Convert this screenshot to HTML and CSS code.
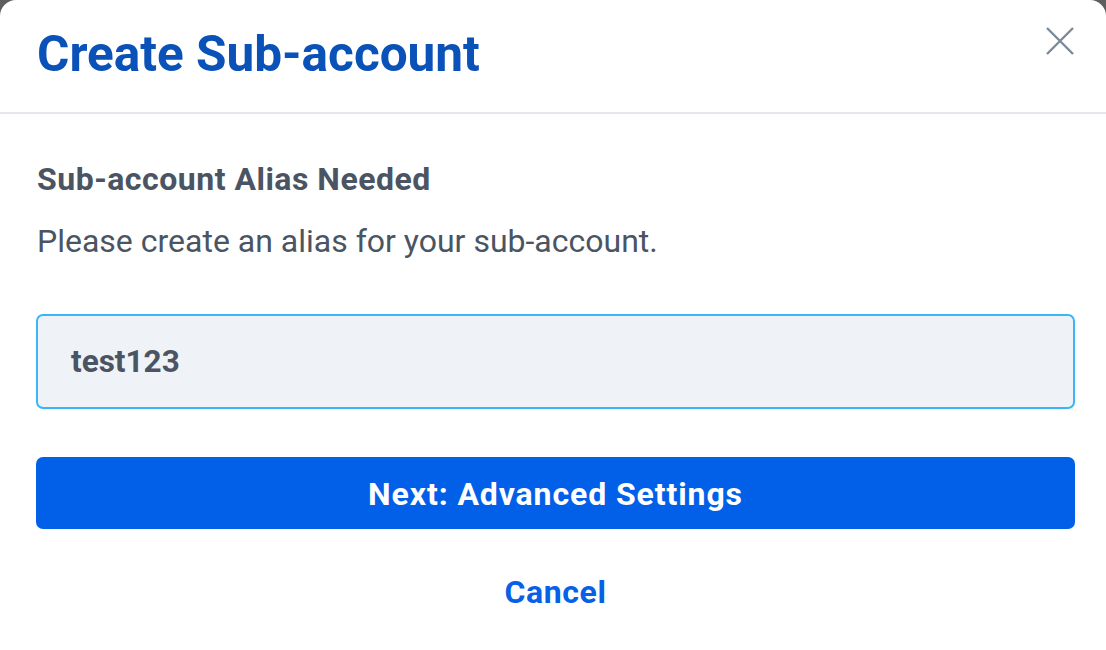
FILE: index.html
```html
<!DOCTYPE html>
<html>
<head>
<meta charset="utf-8">
<link rel="stylesheet" href="styles.css">
</head>
<body>
<div class="modal">
  <div class="modal-header">
    <h1 class="title">Create Sub-account</h1>
    <button class="close" aria-label="Close">
      <svg width="28" height="28" viewBox="0 0 28 28"><path d="M1 1 L27 27 M27 1 L1 27" stroke="#7b8a9a" stroke-width="2.4" fill="none"/></svg>
    </button>
  </div>
  <div class="modal-body">
    <h2 class="subtitle">Sub-account Alias Needed</h2>
    <p class="desc">Please create an alias for your sub-account.</p>
    <div class="field">test123</div>
    <button class="primary">Next: Advanced Settings</button>
    <button class="link">Cancel</button>
  </div>
</div>
</body>
</html>
```

FILE: styles.css
```css
* { box-sizing: border-box; }
html, body { margin: 0; padding: 0; }
body {
  background: #5e5e5e;
  width: 1106px;
  height: 650px;
  overflow: hidden;
  font-family: Roboto, "Liberation Sans", sans-serif;
}
.modal {
  background: #fff;
  border-radius: 16px 16px 0 0;
  height: 650px;
}
.modal-header {
  height: 114px;
  border-bottom: 2px solid #e4e8ed;
  display: flex;
  justify-content: space-between;
  align-items: flex-start;
  padding: 0 32px 0 37px;
}
.title {
  margin: 26px 0 0;
  font-size: 49.5px;
  font-weight: 700;
  color: #0b52b8;
  line-height: 56px;
}
.close {
  margin-top: 27px;
  background: none;
  border: 0;
  padding: 0;
  width: 28px;
  height: 28px;
}
.modal-body {
  padding: 0 31px 0 36px;
  display: flex;
  flex-direction: column;
}
.subtitle {
  margin-top: 47px;
  margin-bottom: 0;
  font-size: 32px;
  letter-spacing: 0.5px;
  font-weight: 700;
  color: #4a5462;
  line-height: 36px;
  padding-left: 1px;
}
.desc {
  margin: 26px 0 0;
  font-size: 32px;
  color: #4a5462;
  line-height: 36px;
  padding-left: 1px;
}
.field {
  margin-top: 55px;
  height: 95px;
  border: 2px solid #3cb5f7;
  border-radius: 7px;
  background: #eff2f7;
  display: flex;
  align-items: center;
  padding-left: 33px;
  font-size: 31.5px;
  font-weight: 700;
  color: #4a5462;
}
.primary {
  margin-top: 48px;
  height: 72px;
  border: 0;
  border-radius: 7px;
  background: #0260e8;
  color: #fff;
  font-family: inherit;
  font-size: 32px;
  letter-spacing: 0.9px;
  font-weight: 700;
  padding-top: 2px;
}
.link {
  margin-top: 44px;
  align-self: center;
  background: none;
  border: 0;
  color: #0760e6;
  font-family: inherit;
  font-size: 32px;
  letter-spacing: 0.6px;
  font-weight: 700;
  padding: 0;
}
```
